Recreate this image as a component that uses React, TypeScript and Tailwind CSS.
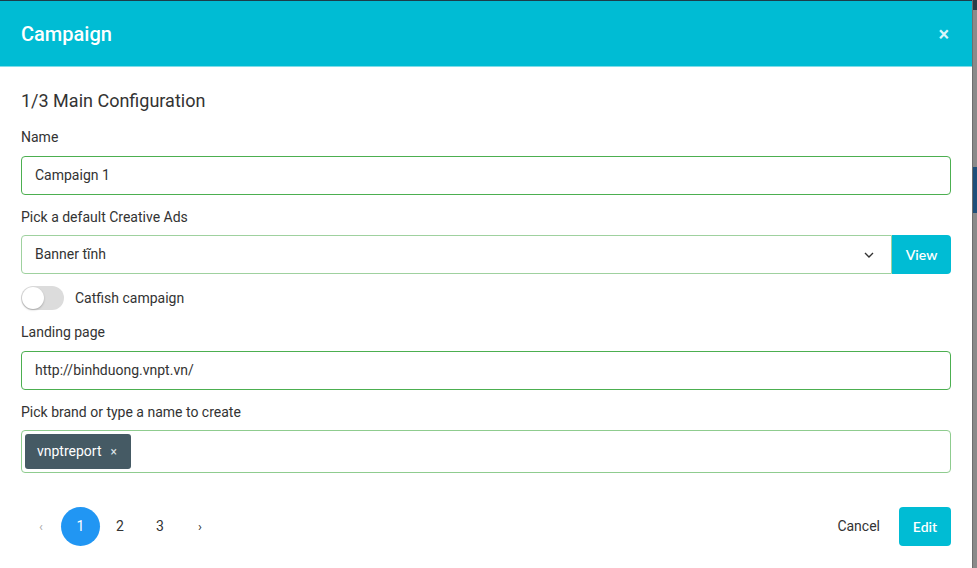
import React from "react";

export default function App() {
  return (
    <div className="flex w-[977px] h-[568px] overflow-hidden bg-white" style={{ fontFamily: "Roboto, 'Liberation Sans', sans-serif" }}>
      <div className="w-[972px] flex flex-col shrink-0">
        <div className="h-[67px] bg-[#00bcd4] border-t border-[#1c3d4a] border-b border-b-[#7fdde9] flex items-center justify-between pl-[21px] pr-[23px]">
          <div className="text-white text-[20px] font-medium">Campaign</div>
          <div className="text-[#d9f5f9] text-[20px] font-semibold leading-none">×</div>
        </div>
        <div className="flex flex-col px-[21px] pt-[20px] text-[#333]">
          <div className="text-[18px] leading-[28px] text-[#333]">1/3 Main Configuration</div>
          <div className="mt-[12px] text-[14px] leading-[20px]">Name</div>
          <div className="mt-[9px] h-[39px] border border-[#4caf50] rounded-[4px] flex items-center px-[13px] text-[14px]">Campaign 1</div>
          <div className="mt-[12px] text-[14px] leading-[20px]">Pick a default Creative Ads</div>
          <div className="mt-[8px] h-[39px] flex">
            <div className="flex-1 border border-[#9fd19f] rounded-l-[4px] flex items-center justify-between px-[13px] text-[14px]">
              <span>Banner tĩnh</span>
              <svg width="10" height="6" viewBox="0 0 10 6" className="mr-[4px]"><path d="M1 1l4 4 4-4" fill="none" stroke="#333" strokeWidth="1.4" /></svg>
            </div>
            <div className="w-[59px] bg-[#00bcd4] rounded-r-[4px] flex items-center justify-center text-white text-[14px] font-semibold" style={{ fontFamily: "Lato, Roboto, sans-serif" }}>View</div>
          </div>
          <div className="mt-[12px] flex items-center h-[24px]">
            <div className="w-[43px] h-[24px] rounded-full bg-[#dcdcdc] relative">
              <div className="absolute left-[1px] top-[1px] w-[22px] h-[22px] rounded-full bg-white shadow-[0_1px_2px_rgba(0,0,0,0.25)]" />
            </div>
            <span className="ml-[11px] text-[14px]">Catfish campaign</span>
          </div>
          <div className="mt-[12px] text-[14px] leading-[20px]">Landing page</div>
          <div className="mt-[9px] h-[39px] border border-[#4caf50] rounded-[4px] flex items-center px-[13px] text-[14px]">http://binhduong.vnpt.vn/</div>
          <div className="mt-[12px] text-[14px] leading-[20px]">Pick brand or type a name to create</div>
          <div className="mt-[8px] h-[43px] border border-[#8fcc8f] rounded-[4px] flex items-center px-[3px]">
            <div className="h-[35px] w-[106px] bg-[#455a64] rounded-[3px] flex items-center pl-[12px] text-white text-[14px]">
              vnptreport <span className="ml-[9px] text-[12px] text-[#dfe5e8]">×</span>
            </div>
          </div>
          <div className="mt-[34px] flex items-center justify-between">
            <div className="flex items-center text-[14px]">
              <span className="w-[40px] text-center text-[#aaa] text-[13px]">‹</span>
              <span className="w-[39px] h-[39px] rounded-full bg-[#2196f3] text-white flex items-center justify-center">1</span>
              <span className="w-[40px] text-center">2</span>
              <span className="w-[40px] text-center">3</span>
              <span className="w-[40px] text-center text-[13px]">›</span>
            </div>
            <div className="flex items-center">
              <span className="text-[14px] mr-[19px]">Cancel</span>
              <div className="w-[52px] h-[39px] bg-[#00bcd4] rounded-[4px] flex items-center justify-center text-white text-[14px] font-semibold" style={{ fontFamily: "Lato, Roboto, sans-serif" }}>Edit</div>
            </div>
          </div>
        </div>
      </div>
      <div className="flex-1 flex flex-col bg-[#8a8a8a] border-l border-[#6e6e6e]">
        <div className="h-[10px] bg-[#2a3d45]" />
        <div className="h-[157px]" />
        <div className="h-[46px] bg-[#1f4f7a]" />
      </div>
    </div>
  );
}
